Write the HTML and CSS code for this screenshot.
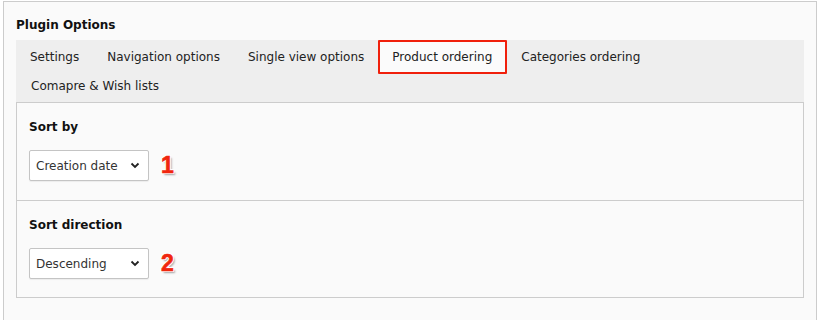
FILE: index.html
```html
<!DOCTYPE html>
<html>
<head>
<meta charset="utf-8">
<link rel="stylesheet" href="styles.css">
</head>
<body>
<div class="box">
  <div class="title">Plugin Options</div>
  <div class="tabbar">
    <div class="tabrow">
      <div class="tab">Settings</div>
      <div class="tab">Navigation options</div>
      <div class="tab">Single view options</div>
      <div class="tab active">Product ordering</div>
      <div class="tab">Categories ordering</div>
    </div>
    <div class="tabrow row2">
      <div class="tab">Comapre &amp; Wish lists</div>
    </div>
  </div>
  <div class="panel">
    <div class="section">
      <div class="label">Sort by</div>
      <div class="field">
        <div class="select"><span>Creation date</span><svg class="chev" width="10" height="7" viewBox="0 0 10 7"><path d="M1.5 1.5 L5 5 L8.5 1.5" fill="none" stroke="#222" stroke-width="1.8"/></svg></div>
        <span class="num">1</span>
      </div>
    </div>
    <div class="section sep">
      <div class="label">Sort direction</div>
      <div class="field">
        <div class="select"><span>Descending</span><svg class="chev" width="10" height="7" viewBox="0 0 10 7"><path d="M1.5 1.5 L5 5 L8.5 1.5" fill="none" stroke="#222" stroke-width="1.8"/></svg></div>
        <span class="num">2</span>
      </div>
    </div>
  </div>
</div>
</body>
</html>
```

FILE: styles.css
```css
html, body {
  margin: 0;
  padding: 0;
  background: #ffffff;
}
body {
  font-family: "DejaVu Sans", Verdana, sans-serif;
  font-size: 12px;
  color: #1a1a1a;
}
.box {
  margin: 1px 2px 0 3px;
  height: 314px;
  border: 1px solid #cccccc;
  background: #fafafa;
  padding: 15px 12px 0 12px;
  box-sizing: content-box;
}
.title {
  font-weight: bold;
  font-size: 12px;
  line-height: 16px;
  margin-bottom: 7px;
  color: #111;
}
.tabbar {
  background: #eeeeee;
}
.tabrow {
  display: flex;
}
.tab {
  height: 34px;
  line-height: 30px;
  padding: 0 12px;
  border: 2px solid transparent;
  box-sizing: border-box;
  font-size: 12px;
  color: #222;
  white-space: nowrap;
}
.tab.active {
  border-color: #f0200c;
  border-radius: 1px;
  background: #fbfbfb;
  padding-right: 13px;
}
.row2 .tab {
  height: 28px;
  line-height: 20px;
  padding-left: 13px;
}
.panel {
  border: 1px solid #cccccc;
  background: #fafafa;
}
.section {
  padding: 15px 12px 19px 12px;
}
.section.sep {
  border-top: 1px solid #cccccc;
  padding-bottom: 18px;
}
.label {
  font-weight: bold;
  font-size: 12px;
  line-height: 18px;
  margin-bottom: 14px;
  color: #111;
}
.field {
  display: flex;
  align-items: center;
  height: 31px;
}
.select {
  width: 120px;
  height: 31px;
  box-sizing: border-box;
  border: 1px solid #c4c4c4;
  border-radius: 2px;
  background: #ffffff;
  display: flex;
  align-items: center;
  justify-content: space-between;
  padding: 0 8px 0 6px;
  font-size: 12px;
  color: #333;
  box-shadow: 0 1px 1px rgba(0,0,0,0.06);
}
.chev {
  display: block;
}
.num {
  margin-left: 12px;
  font-family: "Liberation Sans", Arial, sans-serif;
  font-weight: bold;
  font-size: 23px;
  line-height: 23px;
  color: #f0260e;
  -webkit-text-stroke: 0.6px #f0260e;
  text-shadow: 1px 0 0 #fff, -1px 0 0 #fff, 0 1px 0 #fff, 0 -1px 0 #fff, 1px 1px 0 #fff, -1px -1px 0 #fff, 1px -1px 0 #fff, -1px 1px 0 #fff, 2px 2px 2px rgba(0,0,0,0.35);
}
```
